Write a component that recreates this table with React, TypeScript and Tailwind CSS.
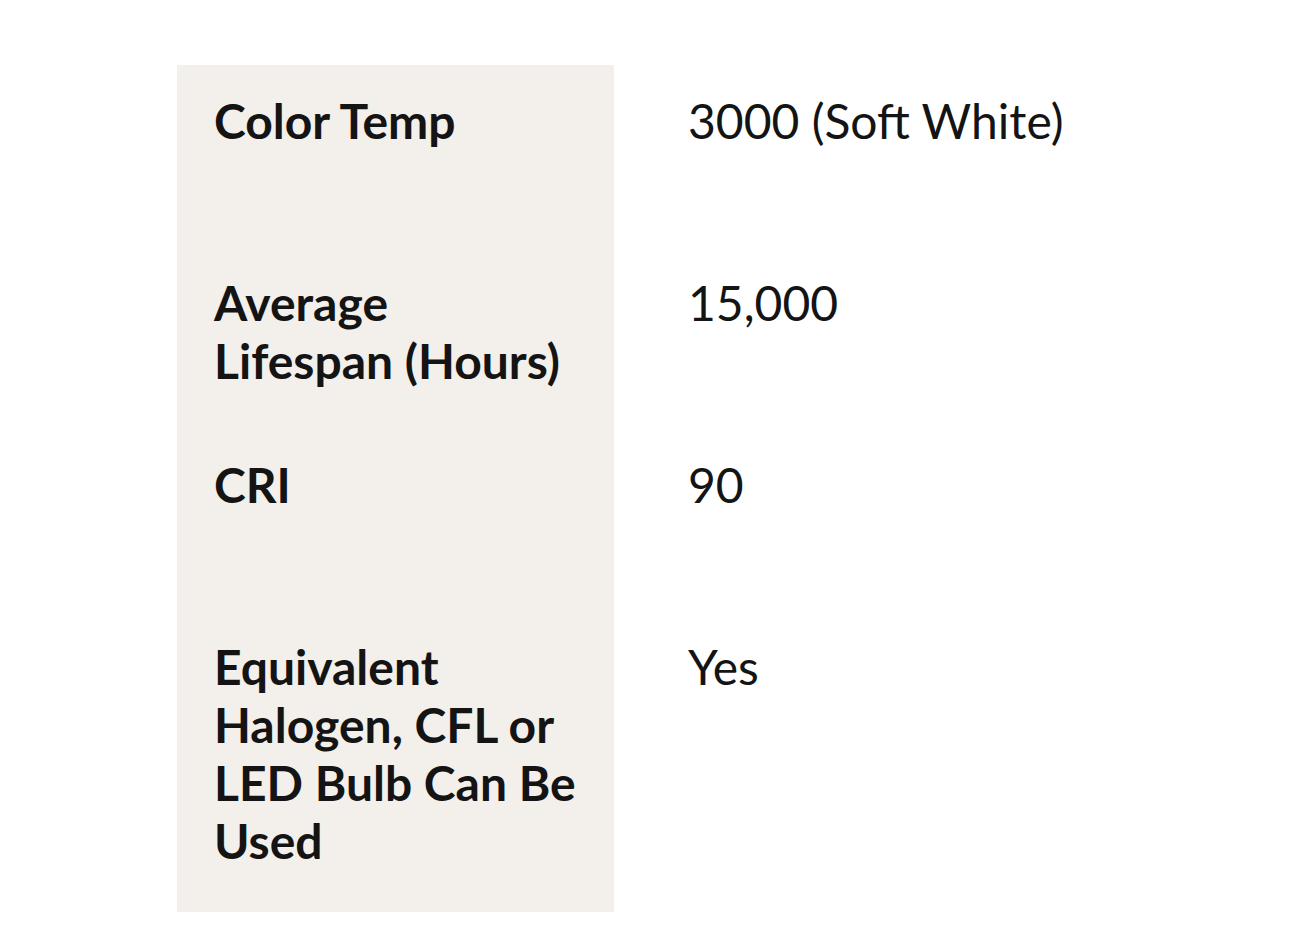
const specs = [
  { label: ["Color Temp"], value: "3000 (Soft White)" },
  { label: ["Average", "Lifespan (Hours)"], value: "15,000" },
  { label: ["CRI"], value: "90" },
  { label: ["Equivalent Halogen, CFL or LED Bulb Can Be Used"], value: "Yes" },
];

export default function App() {
  return (
    <div className="min-h-screen bg-white pt-[65px] pl-[177px] font-['Lato',sans-serif] text-[#141414]">
      <div className="flex flex-col w-[1000px]">
        {specs.map((s, i) => (
          <div key={i} className="flex">
            <div
              className={`w-[437px] shrink-0 bg-[#f3efeb] min-h-[182px] pl-[37px] pr-[30px] pt-[27px] text-[48px] leading-[58px] font-bold ${
                i === specs.length - 1 ? "pb-[42px]" : "pb-[21px]"
              }`}
            >
              {s.label.map((l) => (
                <div key={l}>{l}</div>
              ))}
            </div>
            <div className="pl-[74px] pt-[27px] text-[48px] leading-[58px]">{s.value}</div>
          </div>
        ))}
      </div>
    </div>
  );
}
